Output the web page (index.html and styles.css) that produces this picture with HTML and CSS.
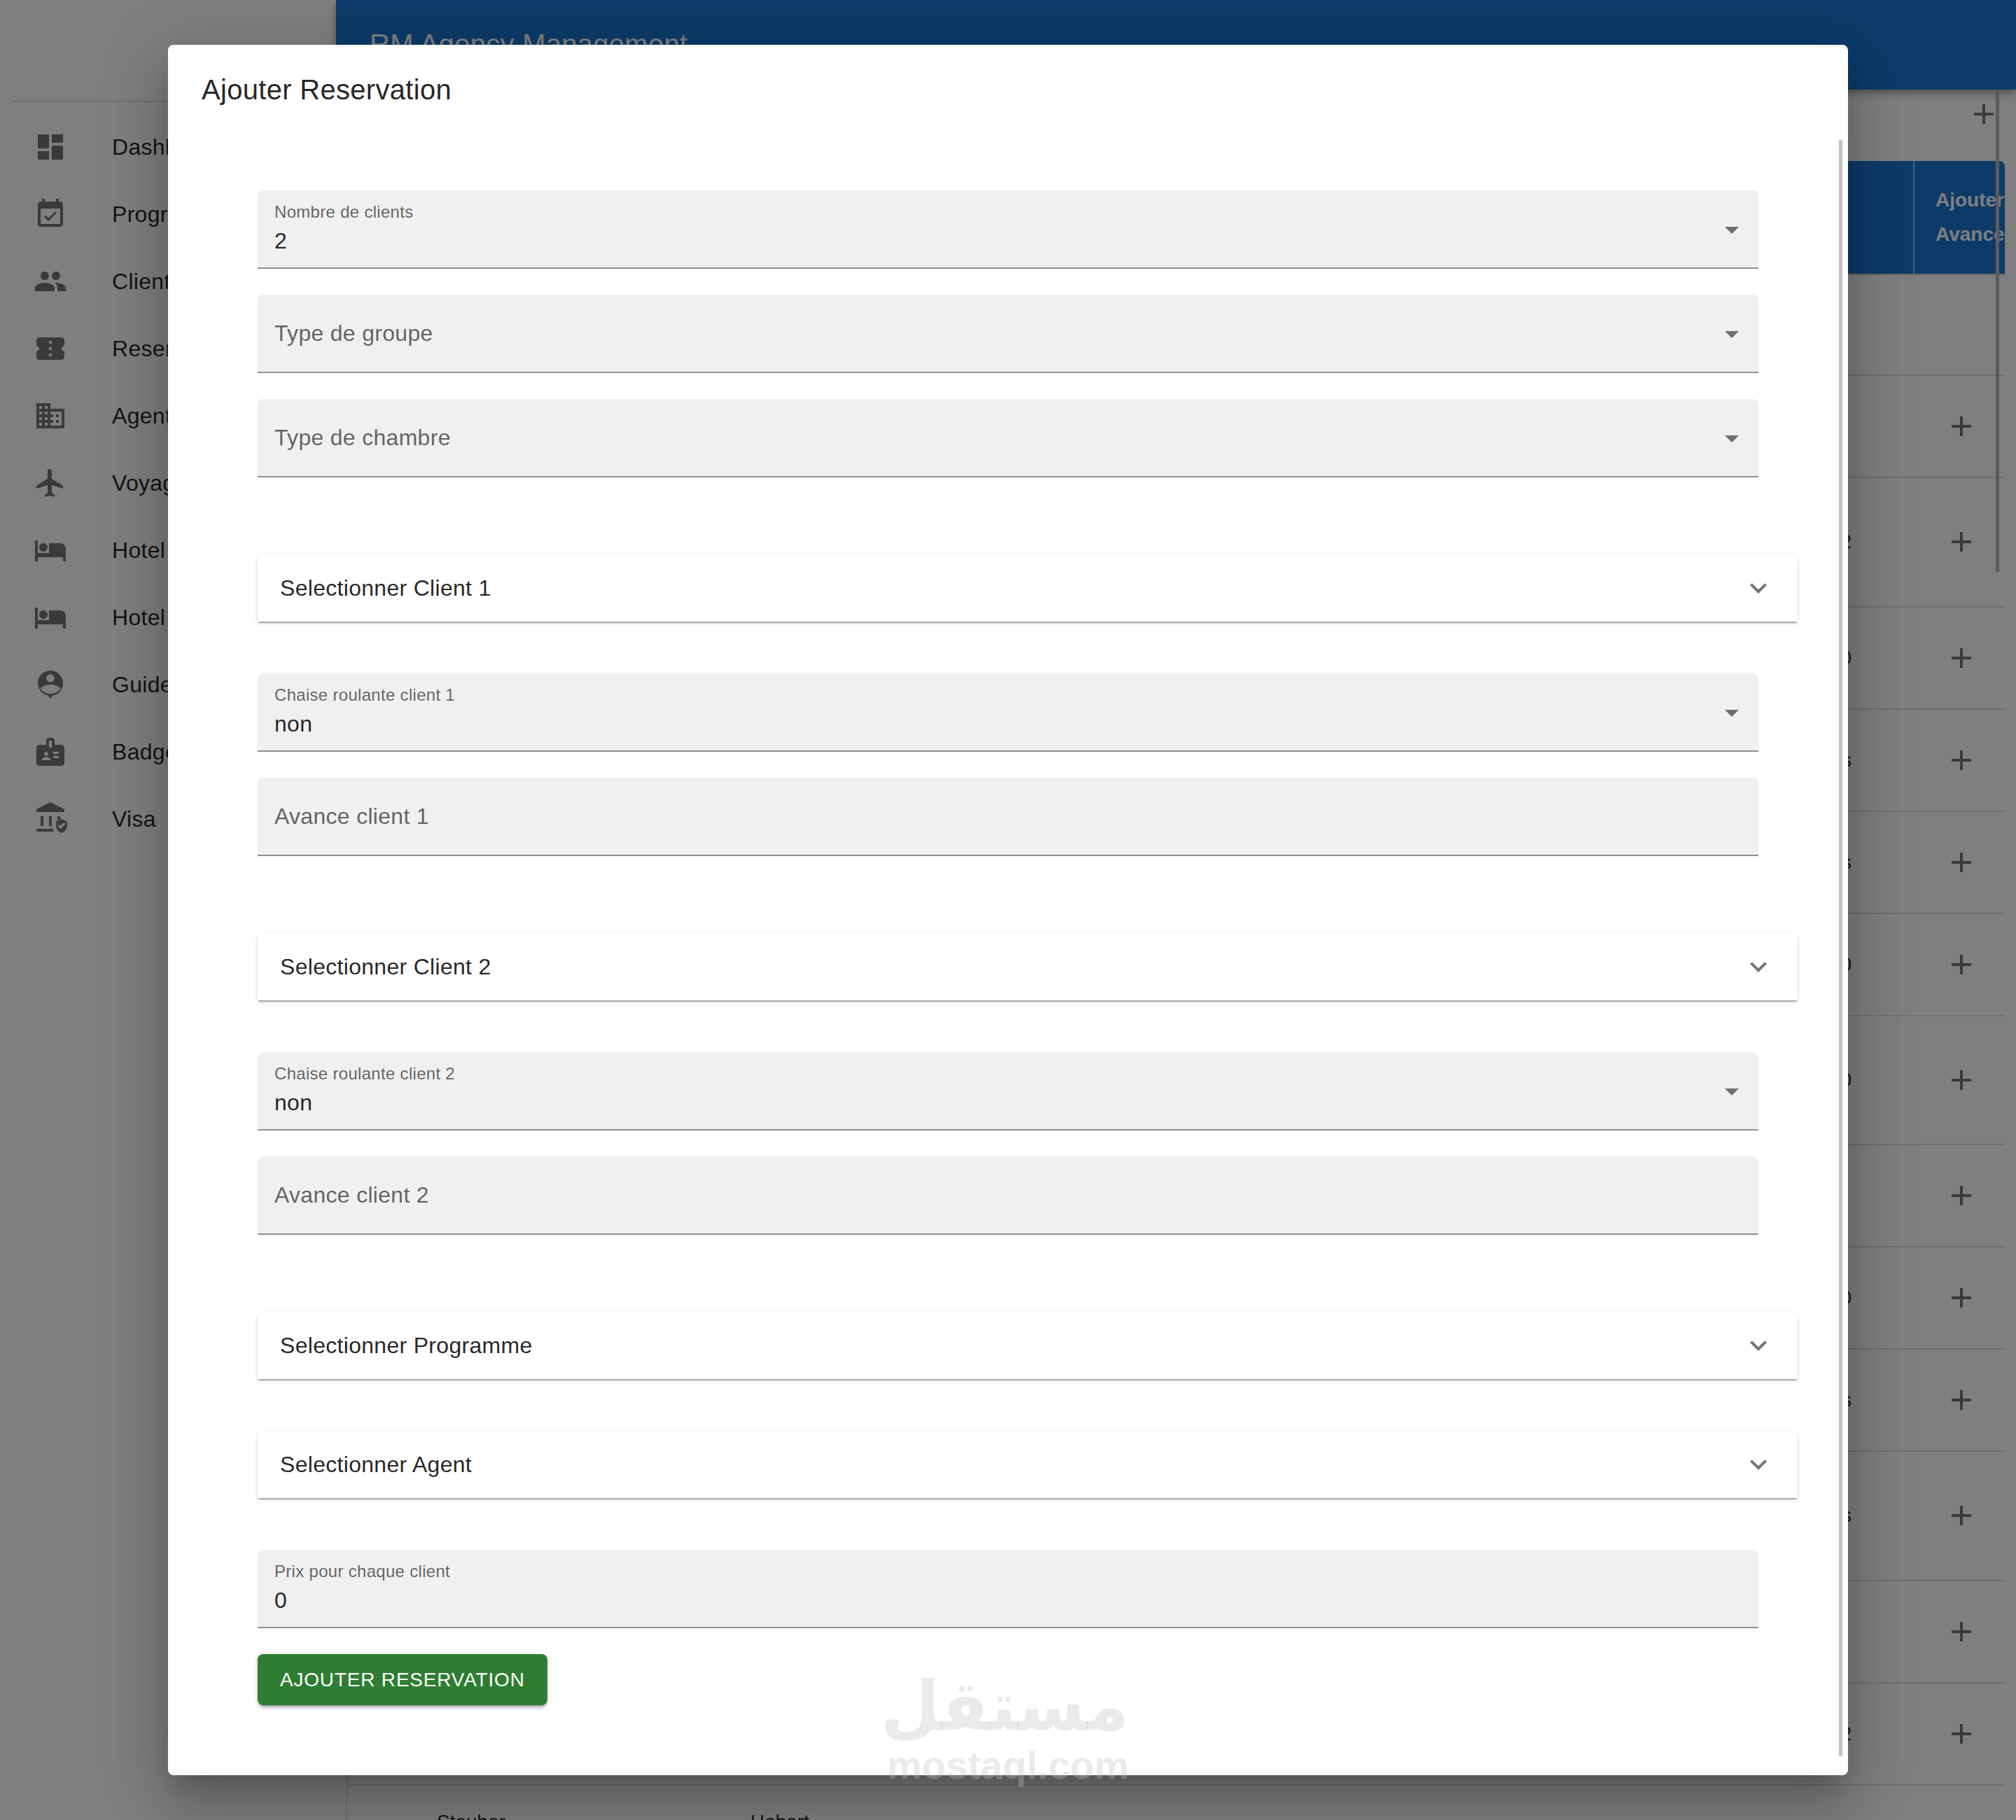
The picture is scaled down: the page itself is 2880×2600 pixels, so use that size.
FILE: index.html
```html
<!DOCTYPE html>
<html lang="fr">
<head>
  <meta charset="UTF-8">
  <title>RM Agency Management</title>
  <link rel="stylesheet" href="styles.css">
</head>
<body>
  <div class="page">
    <aside class="sidebar">
      <div class="sidebar-head"></div>
      <ul class="nav">
        <li class="nav-item"><svg class="icon" viewBox="0 0 24 24"><path d="M3 13h8V3H3v10zm0 8h8v-6H3v6zm10 0h8V11h-8v10zm0-18v6h8V3h-8z"/></svg><span>Dashboard</span></li>
        <li class="nav-item"><svg class="icon" viewBox="0 0 24 24"><path d="M16.53 11.06L15.47 10l-4.88 4.88-2.12-2.12-1.06 1.06L10.59 17l5.94-5.94zM19 3h-1V1h-2v2H8V1H6v2H5c-1.11 0-1.99.9-1.99 2L3 19c0 1.1.89 2 2 2h14c1.1 0 2-.9 2-2V5c0-1.1-.9-2-2-2zm0 16H5V8h14v11z"/></svg><span>Programmes</span></li>
        <li class="nav-item"><svg class="icon" viewBox="0 0 24 24"><path d="M16 11c1.66 0 2.99-1.34 2.99-3S17.66 5 16 5c-1.66 0-3 1.34-3 3s1.34 3 3 3zm-8 0c1.66 0 2.99-1.34 2.99-3S9.66 5 8 5C6.34 5 5 6.34 5 8s1.34 3 3 3zm0 2c-2.33 0-7 1.17-7 3.5V19h14v-2.5c0-2.33-4.67-3.5-7-3.5zm8 0c-.29 0-.62.02-.97.05 1.16.84 1.97 1.97 1.97 3.45V19h6v-2.5c0-2.33-4.67-3.5-7-3.5z"/></svg><span>Clients</span></li>
        <li class="nav-item"><svg class="icon" viewBox="0 0 24 24"><path d="M22 10V6c0-1.11-.9-2-2-2H4c-1.1 0-1.99.89-1.99 2v4c1.1 0 1.99.9 1.99 2s-.89 2-2 2v4c0 1.1.9 2 2 2h16c1.1 0 2-.9 2-2v-4c-1.1 0-2-.9-2-2s.9-2 2-2zm-9 7.5h-2v-2h2v2zm0-4.5h-2v-2h2v2zm0-4.5h-2v-2h2v2z"/></svg><span>Reservations</span></li>
        <li class="nav-item"><svg class="icon" viewBox="0 0 24 24"><path d="M12 7V3H2v18h20V7H12zM6 19H4v-2h2v2zm0-4H4v-2h2v2zm0-4H4V9h2v2zm0-4H4V5h2v2zm4 12H8v-2h2v2zm0-4H8v-2h2v2zm0-4H8V9h2v2zm0-4H8V5h2v2zm10 12h-8v-2h2v-2h-2v-2h2v-2h-2V9h8v10zm-2-8h-2v2h2v-2zm0 4h-2v2h2v-2z"/></svg><span>Agents</span></li>
        <li class="nav-item"><svg class="icon" viewBox="0 0 24 24"><path d="M21 16v-2l-8-5V3.5c0-.83-.67-1.5-1.5-1.5S10 2.67 10 3.5V9l-8 5v2l8-2.5V19l-2 1.5V22l3.5-1 3.5 1v-1.5L13 19v-5.5l8 2.5z"/></svg><span>Voyages</span></li>
        <li class="nav-item"><svg class="icon" viewBox="0 0 24 24"><path d="M7 13c1.66 0 3-1.34 3-3S8.66 7 7 7s-3 1.34-3 3 1.34 3 3 3zm12-6h-8v7H3V5H1v15h2v-3h18v3h2v-9c0-2.21-1.79-4-4-4z"/></svg><span>Hotel Makkah</span></li>
        <li class="nav-item"><svg class="icon" viewBox="0 0 24 24"><path d="M7 13c1.66 0 3-1.34 3-3S8.66 7 7 7s-3 1.34-3 3 1.34 3 3 3zm12-6h-8v7H3V5H1v15h2v-3h18v3h2v-9c0-2.21-1.79-4-4-4z"/></svg><span>Hotel Madinah</span></li>
        <li class="nav-item"><svg class="icon" viewBox="0 0 24 24"><path fill-rule="evenodd" d="M12 2a9 9 0 0 0-9 9c0 4.4 3.2 8 7.3 8.8L12 22l1.7-2.2C17.800 19 21 15.400 21 11a9 9 0 0 0-9-9zm0 2.500a2.850 2.850 0 1 1 0 5.700 2.850 2.850 0 0 1 0-5.700zM12 12c-2.900 0-6.200 1.200-7 3 1.500 2.300 4.200 3.600 7 3.600s5.500-1.300 7-3.600c-.8-1.800-4.100-3-7-3z"/></svg><span>Guide</span></li>
        <li class="nav-item"><svg class="icon" viewBox="0 0 24 24"><path d="M20 7h-5V4c0-1.100-.9-2-2-2h-2c-1.100 0-2 .9-2 2v3H4c-1.100 0-2 .9-2 2v11c0 1.100.9 2 2 2h16c1.100 0 2-.9 2-2V9c0-1.100-.9-2-2-2zM9 12c.83 0 1.500.67 1.500 1.500S9.830 15 9 15s-1.500-.67-1.500-1.500S8.170 12 9 12zm3 6H6v-.75c0-1 2-1.500 3-1.500s3 .5 3 1.500V18zm1-9h-2V4h2v5zm5 7.500h-4V15h4v1.500zm0-3h-4V12h4v1.500z"/></svg><span>Badges</span></li>
        <li class="nav-item"><svg class="icon" viewBox="0 0 24 24"><path d="M5 10h2v7H5zm6 0h2v7h-2zm11-3V5L12 0 2 5v2zM2 19v2h12.400c-.21-.64-.32-1.310-.36-2zM19 12.260V10h-2v3.260zM20 12l-4 2v2.550c0 2.520 1.710 4.880 4 5.450 2.290-.57 4-2.930 4-5.450V14zm-.72 7l-2.030-2 1.060-1.060.97.97 2.410-2.380 1.060 1.060z"/></svg><span>Visa</span></li>
      </ul>
    </aside>

    <main class="main">
      <div class="toolbar-row">
        <svg class="icon" viewBox="0 0 24 24"><path d="M19 13h-6v6h-2v-6H5v-2h6V5h2v6h6v2z"/></svg>
      </div>
      <div class="table">
        <div class="table-head">
          <div class="head-spacer"></div>
          <div class="head-cell">Ajouter<br>Avance</div>
        </div>
        <div class="row row-empty"></div>
        <div class="row"><span class="cell-value"></span><span class="cell-action"><svg class="icon" viewBox="0 0 24 24"><path d="M19 13h-6v6h-2v-6H5v-2h6V5h2v6h6v2z"/></svg></span></div>
        <div class="row row-tall"><span class="cell-value">12</span><span class="cell-action"><svg class="icon" viewBox="0 0 24 24"><path d="M19 13h-6v6h-2v-6H5v-2h6V5h2v6h6v2z"/></svg></span></div>
        <div class="row"><span class="cell-value">10</span><span class="cell-action"><svg class="icon" viewBox="0 0 24 24"><path d="M19 13h-6v6h-2v-6H5v-2h6V5h2v6h6v2z"/></svg></span></div>
        <div class="row"><span class="cell-value">s</span><span class="cell-action"><svg class="icon" viewBox="0 0 24 24"><path d="M19 13h-6v6h-2v-6H5v-2h6V5h2v6h6v2z"/></svg></span></div>
        <div class="row"><span class="cell-value">s</span><span class="cell-action"><svg class="icon" viewBox="0 0 24 24"><path d="M19 13h-6v6h-2v-6H5v-2h6V5h2v6h6v2z"/></svg></span></div>
        <div class="row"><span class="cell-value">10</span><span class="cell-action"><svg class="icon" viewBox="0 0 24 24"><path d="M19 13h-6v6h-2v-6H5v-2h6V5h2v6h6v2z"/></svg></span></div>
        <div class="row row-tall"><span class="cell-value">10</span><span class="cell-action"><svg class="icon" viewBox="0 0 24 24"><path d="M19 13h-6v6h-2v-6H5v-2h6V5h2v6h6v2z"/></svg></span></div>
        <div class="row"><span class="cell-value"></span><span class="cell-action"><svg class="icon" viewBox="0 0 24 24"><path d="M19 13h-6v6h-2v-6H5v-2h6V5h2v6h6v2z"/></svg></span></div>
        <div class="row"><span class="cell-value">10</span><span class="cell-action"><svg class="icon" viewBox="0 0 24 24"><path d="M19 13h-6v6h-2v-6H5v-2h6V5h2v6h6v2z"/></svg></span></div>
        <div class="row"><span class="cell-value">s</span><span class="cell-action"><svg class="icon" viewBox="0 0 24 24"><path d="M19 13h-6v6h-2v-6H5v-2h6V5h2v6h6v2z"/></svg></span></div>
        <div class="row row-tall"><span class="cell-value">s</span><span class="cell-action"><svg class="icon" viewBox="0 0 24 24"><path d="M19 13h-6v6h-2v-6H5v-2h6V5h2v6h6v2z"/></svg></span></div>
        <div class="row"><span class="cell-value"></span><span class="cell-action"><svg class="icon" viewBox="0 0 24 24"><path d="M19 13h-6v6h-2v-6H5v-2h6V5h2v6h6v2z"/></svg></span></div>
        <div class="row"><span class="cell-value">12</span><span class="cell-action"><svg class="icon" viewBox="0 0 24 24"><path d="M19 13h-6v6h-2v-6H5v-2h6V5h2v6h6v2z"/></svg></span></div>
        <div class="row-names"><span class="name-first">Steuber</span><span>Hobart</span></div>
      </div>
    </main>

    <header class="appbar">RM Agency Management</header>
    <div class="page-scroll"></div>
    <div class="backdrop"></div>

    <section class="modal">
      <h2 class="modal-title">Ajouter Reservation</h2>
      <form class="modal-form">
        <div class="field">
          <div class="field-text"><label class="field-label">Nombre de clients</label><div class="field-value">2</div></div>
          <svg class="icon arrow" viewBox="0 0 24 24"><path d="M7 10l5 5 5-5z"/></svg>
        </div>
        <div class="field">
          <div class="field-placeholder">Type de groupe</div>
          <svg class="icon arrow" viewBox="0 0 24 24"><path d="M7 10l5 5 5-5z"/></svg>
        </div>
        <div class="field">
          <div class="field-placeholder">Type de chambre</div>
          <svg class="icon arrow" viewBox="0 0 24 24"><path d="M7 10l5 5 5-5z"/></svg>
        </div>

        <div class="accordion">
          <span>Selectionner Client 1</span>
          <svg class="icon chevron" viewBox="0 0 24 24"><path d="M16.590 8.590L12 13.170 7.410 8.590 6 10l6 6 6-6z"/></svg>
        </div>
        <div class="field">
          <div class="field-text"><label class="field-label">Chaise roulante client 1</label><div class="field-value">non</div></div>
          <svg class="icon arrow" viewBox="0 0 24 24"><path d="M7 10l5 5 5-5z"/></svg>
        </div>
        <div class="field">
          <div class="field-placeholder">Avance client 1</div>
        </div>

        <div class="accordion">
          <span>Selectionner Client 2</span>
          <svg class="icon chevron" viewBox="0 0 24 24"><path d="M16.590 8.590L12 13.170 7.410 8.590 6 10l6 6 6-6z"/></svg>
        </div>
        <div class="field">
          <div class="field-text"><label class="field-label">Chaise roulante client 2</label><div class="field-value">non</div></div>
          <svg class="icon arrow" viewBox="0 0 24 24"><path d="M7 10l5 5 5-5z"/></svg>
        </div>
        <div class="field">
          <div class="field-placeholder">Avance client 2</div>
        </div>

        <div class="accordion">
          <span>Selectionner Programme</span>
          <svg class="icon chevron" viewBox="0 0 24 24"><path d="M16.590 8.590L12 13.170 7.410 8.590 6 10l6 6 6-6z"/></svg>
        </div>
        <div class="accordion">
          <span>Selectionner Agent</span>
          <svg class="icon chevron" viewBox="0 0 24 24"><path d="M16.590 8.590L12 13.170 7.410 8.590 6 10l6 6 6-6z"/></svg>
        </div>

        <div class="field">
          <div class="field-text"><label class="field-label">Prix pour chaque client</label><div class="field-value">0</div></div>
        </div>
        <button type="button" class="submit-btn">Ajouter Reservation</button>
      </form>
      <div class="modal-scroll"></div>
    </section>

    <div class="watermark">
      <div class="watermark-ar" lang="ar" dir="rtl">مستقل</div>
      <div class="watermark-en">mostaql.com</div>
    </div>
  </div>
</body>
</html>
```

FILE: styles.css
```css
* {
  box-sizing: border-box;
}
body {
  margin: 0;
  font-family: 'Liberation Sans', Arial, sans-serif;
  font-size: 32px;
  color: rgba(0, 0, 0, 0.87);
  background-color: #fff;
}
.page {
  position: relative;
  display: flex;
  height: 2600px;
  overflow: hidden;
}
.icon {
  display: block;
  flex: none;
  width: 48px;
  height: 48px;
  fill: rgba(0, 0, 0, 0.54);
}

/* sidebar */
.sidebar {
  flex: none;
  width: 496px;
  border-right: 2px solid rgba(0, 0, 0, 0.12);
}
.sidebar-head {
  height: 146px;
  margin-left: 16px;
  border-bottom: 2px solid rgba(0, 0, 0, 0.12);
}
.nav {
  list-style: none;
  margin: 0;
  padding: 16px 0 0 48px;
}
.nav-item {
  display: flex;
  align-items: center;
  height: 96px;
  letter-spacing: 0.00938em;
  white-space: nowrap;
}
.nav-item .icon {
  margin-right: 64px;
}

/* app bar */
.appbar {
  position: absolute;
  top: 0;
  left: 480px;
  right: 0;
  height: 128px;
  padding-left: 48px;
  line-height: 126px;
  font-size: 40px;
  letter-spacing: 0.0065em;
  color: #fff;
  background-color: #1976d2;
  box-shadow: 0 4px 8px -2px rgba(0, 0, 0, 0.2), 0 8px 10px 0 rgba(0, 0, 0, 0.14), 0 2px 20px 0 rgba(0, 0, 0, 0.12);
}
.page-scroll {
  position: absolute;
  top: 128px;
  left: 2851px;
  width: 5px;
  height: 689px;
  background-color: #b8b8b8;
}

/* table behind the dialog */
.main {
  flex: 1;
  padding: 128px 16px 0 0;
  min-width: 0;
}
.toolbar-row {
  display: flex;
  justify-content: flex-end;
  height: 102px;
  padding: 11px 6px 0 0;
}
.table-head {
  display: flex;
  height: 161px;
  color: #fff;
  background-color: #1976d2;
  border-top-right-radius: 8px;
  box-shadow: 0 2px 2px rgba(0, 0, 0, 0.2);
  overflow: hidden;
}
.head-spacer {
  flex: 1;
}
.head-cell {
  flex: none;
  align-self: stretch;
  width: 131px;
  padding: 31px 0 0 30px;
  font-size: 28px;
  font-weight: bold;
  line-height: 49px;
  white-space: nowrap;
  border-left: 2px solid rgba(255, 255, 255, 0.6);
}
.row {
  display: grid;
  grid-template-columns: 1fr 131px;
  align-items: center;
  height: 146px;
  border-bottom: 2px solid rgba(0, 0, 0, 0.12);
  font-size: 28px;
}
.row-tall {
  height: 184.5px;
}
.cell-value {
  padding-right: 88px;
  text-align: right;
}
.cell-action {
  padding-left: 45px;
}
.row-names {
  display: flex;
  padding: 36px 0 0 128px;
  font-size: 28px;
  line-height: 32px;
}
.name-first {
  width: 448px;
}

/* dialog */
.backdrop {
  position: absolute;
  inset: 0;
  background-color: rgba(0, 0, 0, 0.5);
}
.modal {
  position: absolute;
  top: 64px;
  left: 240px;
  width: 2400px;
  height: 2472px;
  overflow: hidden;
  background-color: #fff;
  border-radius: 8px;
  box-shadow: 0 22px 30px -14px rgba(0, 0, 0, 0.2), 0 48px 76px 6px rgba(0, 0, 0, 0.14), 0 18px 92px 16px rgba(0, 0, 0, 0.12);
}
.modal-title {
  margin: 0;
  padding: 32px 48px;
  font-size: 40px;
  font-weight: 400;
  line-height: 64px;
  letter-spacing: 0.0075em;
}
.modal-form {
  padding: 80px 72px 0 128px;
}
.modal-scroll {
  position: absolute;
  top: 136px;
  right: 8px;
  width: 5px;
  height: 2309px;
  background-color: #c1c1c1;
}
.field {
  display: flex;
  align-items: center;
  width: 2144px;
  height: 112px;
  margin-bottom: 37px;
  padding: 0 14px 0 24px;
  letter-spacing: 0.00938em;
  background-color: #f0f0f0;
  border-bottom: 2px solid #8f8f8f;
  border-radius: 8px 8px 0 0;
}
.field-text {
  flex: 1;
  align-self: flex-start;
  padding-top: 17px;
}
.field-label {
  display: block;
  font-size: 24px;
  line-height: 28px;
  color: rgba(0, 0, 0, 0.6);
}
.field-value {
  margin-top: 8px;
  line-height: 38px;
}
.field-placeholder {
  flex: 1;
  color: rgba(0, 0, 0, 0.6);
}
.arrow {
  margin-top: 2px;
}
.accordion {
  display: flex;
  align-items: center;
  justify-content: space-between;
  width: 2200px;
  height: 96px;
  margin: 110px 0 74px;
  padding: 0 32px;
  letter-spacing: 0.00938em;
  background-color: #fff;
  border-radius: 8px 8px 0 0;
  box-shadow: 0 4px 2px -2px rgba(0, 0, 0, 0.2), 0 2px 2px 0 rgba(0, 0, 0, 0.14), 0 2px 6px 0 rgba(0, 0, 0, 0.12);
}
.accordion + .accordion {
  margin-top: 74px;
}
.submit-btn {
  display: block;
  padding: 12px 32px;
  font-family: inherit;
  font-size: 28px;
  line-height: 49px;
  letter-spacing: 0.02857em;
  text-transform: uppercase;
  color: #fff;
  background-color: #2e7d32;
  border: none;
  border-radius: 8px;
  box-shadow: 0 6px 2px -4px rgba(0, 0, 0, 0.2), 0 4px 4px 0 rgba(0, 0, 0, 0.14), 0 2px 10px 0 rgba(0, 0, 0, 0.12);
}

/* watermark */
.watermark {
  position: absolute;
  top: 2380px;
  left: 1267px;
  width: 346px;
  z-index: 2;
  color: rgba(190, 190, 190, 0.33);
  pointer-events: none;
  text-align: center;
}
.watermark-ar {
  height: 110px;
  font-family: 'DejaVu Sans', sans-serif;
  font-size: 97px;
  font-weight: bold;
  line-height: 116px;
}
.watermark-en {
  font-size: 56px;
  font-weight: bold;
  line-height: 64px;
}
```
